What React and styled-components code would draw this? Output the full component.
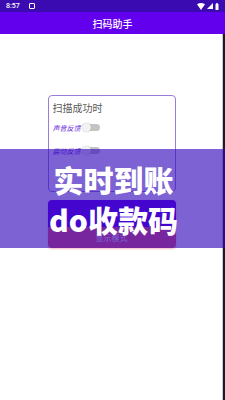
import styled, { createGlobalStyle } from "styled-components"

const Global = createGlobalStyle`
    html, body {
        margin: 0;
        padding: 0;
        background: #fff;
    }
    body {
        font-family: "Noto Sans CJK SC", "Noto Sans", sans-serif;
    }
`

const Phone = styled.div`
    position: relative;
    width: 225px;
    height: 400px;
    overflow: hidden;
    display: flex;
    flex-direction: column;
    background: #fff;
`

const StatusBar = styled.div`
    height: 12px;
    background: #3a0bb0;
    display: flex;
    align-items: center;
    padding: 0 6px;
    color: #fff;
    font-family: "Roboto", "Liberation Sans", sans-serif;
    font-size: 7px;
    font-weight: 500;
`

const Clock = styled.span`
    margin-right: 9px;
`

const NoticeIcon = styled.span`
    width: 4px;
    height: 4px;
    border: 1px solid #fff;
    border-radius: 1px;
`

const StatusIcons = styled.div`
    margin-left: auto;
    display: flex;
    align-items: center;
    gap: 2px;
`

const AppBar = styled.div`
    height: 22px;
    background: #6200ee;
    display: flex;
    align-items: center;
    justify-content: center;
    color: #fff;
    font-size: 10px;
    font-weight: 500;
`

const Content = styled.div`
    flex: 1;
    display: flex;
    flex-direction: column;
    align-items: center;
    padding-top: 61px;
    border-right: 2px solid #1d1a2c;
    box-shadow: inset -1px 0 0 #c8c8cc;
`

const Card = styled.div`
    box-sizing: border-box;
    width: 128px;
    height: 97px;
    border: 1px solid #9a7cdc;
    border-radius: 4px;
    padding: 6px 4px 0 4px;
    display: flex;
    flex-direction: column;
`

const CardTitle = styled.div`
    font-size: 10px;
    line-height: 12px;
    color: #5a5a5a;
    margin-bottom: 2px;
`

const Row = styled.div`
    height: 23px;
    display: flex;
    align-items: center;
`

const RowLabel = styled.span`
    width: 30px;
    font-size: 7px;
    font-style: italic;
    color: #6a2fe0;
`

const Track = styled.span`
    position: relative;
    width: 17px;
    height: 7px;
    border-radius: 4px;
    background: #c4c4c4;
`

const Thumb = styled.span`
    position: absolute;
    left: -1px;
    top: -1px;
    width: 9px;
    height: 9px;
    border-radius: 50%;
    background: #f2f2f2;
    box-shadow: 0 0 1px rgba(0, 0, 0, 0.35);
`

const ModeButton = styled.button`
    width: 128px;
    height: 48px;
    margin-top: 8px;
    border: none;
    border-radius: 4px;
    background: linear-gradient(#6200ee 0 56%, #ee5a6a 56% 100%);
    box-shadow: 0 1px 2px rgba(240, 120, 140, 0.5);
    color: #fff;
    font-family: "Noto Sans CJK SC", sans-serif;
    font-size: 8px;
    display: flex;
    align-items: flex-end;
    justify-content: center;
    padding: 0 0 5px 0;
`

const Banner = styled.div`
    position: absolute;
    left: 0;
    right: 0;
    top: 149px;
    height: 99px;
    background: rgba(52, 10, 188, 0.64);
    display: flex;
    flex-direction: column;
    align-items: center;
    justify-content: center;
    color: #fff;
    font-family: "Noto Sans CJK SC", sans-serif;
    font-size: 30px;
    font-weight: 900;
    line-height: 40px;
    padding-left: 2px;
`

const BannerLine = styled.div`
    white-space: nowrap;
`

const Switch = () => (
    <Track>
        <Thumb />
    </Track>
)

const App = () => {
    return (
        <Phone>
            <Global />
            <StatusBar>
                <Clock>8:57</Clock>
                <NoticeIcon />
                <StatusIcons>
                    <svg width="8" height="7" viewBox="0 0 8 7">
                        <path d="M0 1.2 Q4 -1 8 1.2 L4 7 Z" fill="#fff" />
                    </svg>
                    <svg width="6" height="6" viewBox="0 0 6 6">
                        <path d="M6 0 L6 6 L0 6 Z" fill="#fff" />
                    </svg>
                    <svg width="4" height="7" viewBox="0 0 4 7">
                        <rect x="1.2" y="0" width="1.6" height="1" fill="#fff" />
                        <rect x="0.5" y="1" width="3" height="6" rx="0.5" fill="#fff" />
                    </svg>
                </StatusIcons>
            </StatusBar>
            <AppBar>扫码助手</AppBar>
            <Content>
                <Card>
                    <CardTitle>扫描成功时</CardTitle>
                    <Row>
                        <RowLabel>声音反馈</RowLabel>
                        <Switch />
                    </Row>
                    <Row>
                        <RowLabel>震动反馈</RowLabel>
                        <Switch />
                    </Row>
                </Card>
                <ModeButton>显示模式</ModeButton>
            </Content>
            <Banner>
                <BannerLine>实时到账</BannerLine>
                <BannerLine>do收款码</BannerLine>
            </Banner>
        </Phone>
    )
}

export default App
